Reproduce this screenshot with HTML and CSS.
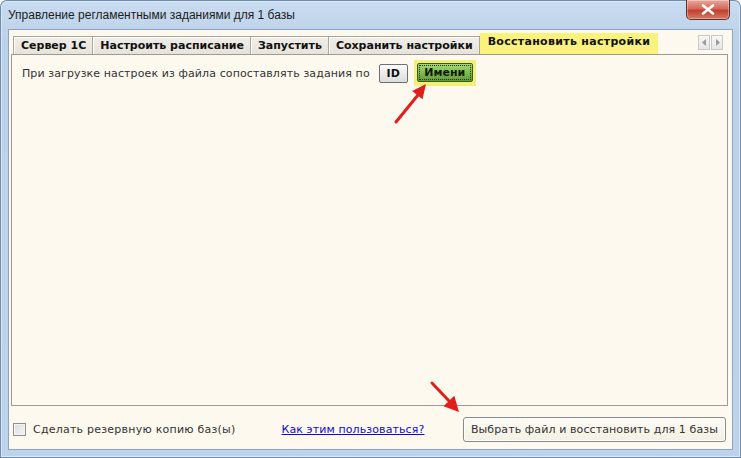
FILE: index.html
```html
<!DOCTYPE html>
<html lang="ru">
<head>
<meta charset="utf-8">
<title>Управление регламентными заданиями</title>
<link rel="stylesheet" href="styles.css">
</head>
<body>
<div class="window">
  <div class="titlebar">
    <span class="title">Управление регламентными заданиями для 1 базы</span>
    <div class="close">
      <svg width="14" height="11" viewBox="0 0 14 11"><path d="M2 1.5 L12 9.5 M12 1.5 L2 9.5" stroke="#fff" stroke-width="2.6" stroke-linecap="round"/></svg>
    </div>
  </div>
  <div class="client">
    <div class="tabstrip">
      <div class="tab">Сервер 1С</div>
      <div class="tab">Настроить расписание</div>
      <div class="tab">Запустить</div>
      <div class="tab">Сохранить настройки</div>
      <div class="tab active">Восстановить настройки</div>
      <div class="scroller">
        <span class="sbtn"><svg width="5" height="7" viewBox="0 0 5 7"><path d="M4 0 L0 3.5 L4 7Z" fill="#9a9a9a"/></svg></span>
        <span class="sbtn"><svg width="5" height="7" viewBox="0 0 5 7"><path d="M1 0 L5 3.5 L1 7Z" fill="#9a9a9a"/></svg></span>
      </div>
    </div>
    <div class="panel">
      <div class="row">
        <span class="label">При загрузке настроек из файла сопоставлять задания по</span>
        <button class="btn btn-id">ID</button>
        <span class="hl"><button class="btn btn-name">Имени</button></span>
      </div>
    </div>
    <div class="footer">
      <label class="check"><span class="box"></span>Сделать резервную копию баз(ы)</label>
      <a class="link" href="#">Как этим пользоваться?</a>
      <button class="restore">Выбрать файл и восстановить для 1 базы</button>
    </div>
  </div>
  <svg class="arrows" width="741" height="458" viewBox="0 0 741 458">
    <line x1="396" y1="122" x2="418" y2="95" stroke="#e01f1c" stroke-width="3" stroke-linecap="round"/>
    <polygon points="426,84 422.5,99.2 412.2,91" fill="#e01f1c"/>
    <line x1="432" y1="383" x2="450" y2="402" stroke="#e01f1c" stroke-width="3" stroke-linecap="round"/>
    <polygon points="459,412 443.5,406.3 454.3,395.8" fill="#e01f1c"/>
  </svg>
</div>
</body>
</html>
```
FILE: styles.css
```css
* { box-sizing: border-box; }
html, body { margin: 0; padding: 0; }
body {
  width: 741px;
  height: 458px;
  overflow: hidden;
  background: #ffffff;
}
.window {
  position: relative;
  width: 741px;
  height: 458px;
  background: linear-gradient(#c9dbef, #bcd2ea 40px, #bdd3ec);
  border-radius: 7px 7px 0 0;
  box-shadow: inset 0 0 0 1px #6e8caf, inset 0 0 0 2px #dbe8f6;
  padding: 0 8px 8px 8px;
  display: flex;
  flex-direction: column;
}
.titlebar {
  height: 29px;
  display: flex;
  align-items: flex-start;
  justify-content: space-between;
}
.title {
  font-family: "Liberation Sans", Arial, sans-serif;
  font-size: 12px;
  color: #1b1b1b;
  margin-top: 8px;
}
.close {
  width: 44px;
  height: 20px;
  margin-right: 3px;
  border: 1px solid #6b2a25;
  border-top: none;
  border-radius: 0 0 5px 5px;
  background: linear-gradient(#e8a99c, #d36a5c 45%, #c2402f 55%, #d47a66);
  display: flex;
  align-items: center;
  justify-content: center;
  box-shadow: inset 0 0 0 1px rgba(255,255,255,0.35);
}
.client {
  flex: 1;
  background: #fdf9ee;
  border: 1px solid #8ea3bd;
  display: flex;
  flex-direction: column;
  font-family: "DejaVu Sans", Verdana, sans-serif;
}
.tabstrip {
  height: 22px;
  margin-top: 2px;
  padding-left: 4px;
  display: flex;
  align-items: flex-end;
}
.tab {
  height: 18px;
  padding: 0 6px 0 7px;
  margin-right: -1px;
  border: 1px solid #a9a59d;
  border-bottom: none;
  background: linear-gradient(#f1eee8, #e7e3da);
  box-shadow: inset 1px 1px 0 #ffffff;
  font-size: 11px;
  font-weight: bold;
  color: #111;
  line-height: 17px;
  white-space: nowrap;
}
.tab.active {
  height: 21px;
  padding: 0 8px;
  margin-left: 1px;
  border: none;
  background: #f9f27d;
  box-shadow: none;
  letter-spacing: 0.3px;
  line-height: 18px;
}
.scroller {
  margin-left: auto;
  margin-right: 9px;
  align-self: center;
  display: flex;
  gap: 1px;
  margin-top: -1px;
}
.sbtn {
  width: 12px;
  height: 15px;
  border: 1px solid #c9c9c9;
  background: linear-gradient(#f7f7f7, #e6e6e6);
  display: flex;
  align-items: center;
  justify-content: center;
}
.panel {
  flex: 1;
  margin: 0 4px 0 2px;
  border: 1px solid #9a9a9a;
  background: #fdf9ee;
  padding: 5px 0 0 10px;
}
.row {
  display: flex;
  align-items: center;
  height: 26px;
}
.label {
  font-size: 11px;
  letter-spacing: 0.1px;
  color: #333;
  margin-right: 9px;
}
.btn {
  font-family: "DejaVu Sans", Verdana, sans-serif;
  font-size: 11px;
  font-weight: bold;
  height: 19px;
  padding: 0;
  border-radius: 2px;
  color: #111;
}
.btn-id {
  width: 29px;
  border: 1px solid #6f6f6f;
  background: linear-gradient(#fbfbfb, #dcdcdc);
  margin-right: 6px;
}
.hl {
  background: #f3f07a;
  padding: 3px 3px 4px 3px;
  display: flex;
}
.btn-name {
  width: 56px;
  border: 1px solid #3c5a22;
  outline: 1px dotted #1f2e12;
  outline-offset: -3px;
  background: linear-gradient(#a6d878, #79b548 60%, #5f9a36);
  color: #0d1a05;
}
.footer {
  height: 43px;
  display: flex;
  align-items: center;
  padding: 4px 6px 0 4px;
}
.check {
  display: flex;
  align-items: center;
  font-size: 11px;
  letter-spacing: 0.23px;
  color: #333;
}
.box {
  width: 13px;
  height: 13px;
  border: 1px solid #8e8f8f;
  background: linear-gradient(135deg, #dcdcdc, #f6f6f6);
  box-shadow: inset 0 0 0 1px #f4f4f4;
  margin-right: 7px;
}
.link {
  margin-left: 46px;
  font-size: 11px;
  letter-spacing: 0.1px;
  color: #0b0bd0;
  text-decoration: underline;
}
.restore {
  margin-left: auto;
  height: 25px;
  padding: 0 7px;
  font-family: "DejaVu Sans", Verdana, sans-serif;
  font-size: 11px;
  letter-spacing: 0.1px;
  color: #333;
  border: 1px solid #8a8a8a;
  border-radius: 3px;
  background: linear-gradient(#fdfbf5, #f3efe3);
  box-shadow: inset 0 0 0 1px #ffffff;
}
.arrows {
  position: absolute;
  left: 0;
  top: 0;
  pointer-events: none;
}
```
